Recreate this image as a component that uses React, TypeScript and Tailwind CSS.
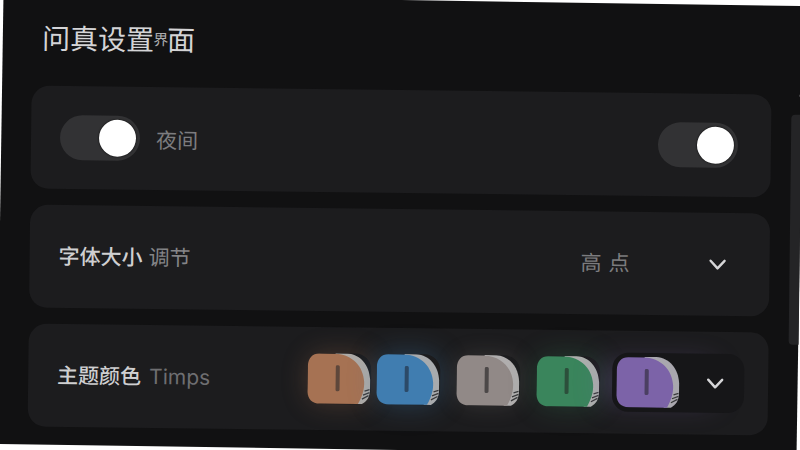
import { useState } from 'react'

interface SwitchProps {
  label: string
  id: string
}

const THEMES = [
  { key: 'orange', face: '#a67253', rim: '#aeaaa6', bar: '#5e473b', glow: 'shadow-[0_0_26px_#a66f4e4d]' },
  { key: 'blue', face: '#407db0', rim: '#a8abae', bar: '#2c4a68', glow: 'shadow-[0_0_28px_#3f7db05c]' },
  { key: 'gray', face: '#918987', rim: '#b0aeae', bar: '#4c4848', glow: 'shadow-[0_0_22px_#91888638]' },
  { key: 'green', face: '#3a855c', rim: '#acafac', bar: '#2c4f3b', glow: 'shadow-[0_0_28px_#38835a52]' },
  { key: 'purple', face: '#7c63a8', rim: '#a9a7ae', bar: '#4b3f62', glow: 'shadow-none' },
]

type Theme = (typeof THEMES)[number]

function Switch({ label, id }: SwitchProps) {
  const [on, setOn] = useState(true)

  return (
    <input
      id={id}
      type="checkbox"
      role="switch"
      aria-label={label}
      checked={on}
      onChange={(e) => setOn(e.target.checked)}
      className="flex h-[45px] w-20 shrink-0 cursor-pointer appearance-none items-center rounded-full bg-[#323234] px-1
                 before:size-[37px] before:rounded-full before:bg-white before:shadow-[0_0_2px_#000]
                 checked:justify-end"
    />
  )
}

function Chevron() {
  return (
    <svg className="h-3 w-[18px]" viewBox="0 0 18 12" fill="none" stroke="#d6d6d8" aria-hidden="true">
      <path strokeLinecap="round" strokeLinejoin="round" strokeWidth={2.4} d="M2 2l7 7.6L16 2" />
    </svg>
  )
}

function Token({ face, rim, bar }: Theme) {
  return (
    <svg className="h-[51px] w-16" viewBox="0 0 64 51" aria-hidden="true">
      <path fill={rim} d="M28 0H40C53 1 62 11 63 26V36C63 43 60 48 55 50.500H48Z" />
      <path stroke="#3a3a3c" strokeWidth={1.3} d="M57.500 37.500l5-1.500M56 41.500l6.500-2.500M55 45.500l6.500-3.500" />
      <path
        fill={face}
        d="M12 .5H28C45 1 56 13 57 28C57.500 36 55 44 51 50.500H13C5 50.500 1 46 .5 39V13C1 5 5 .5 12 .5Z"
      />
      <rect x="28.500" y="12" width="4" height="26" rx="1.500" fill={bar} />
    </svg>
  )
}

const CARD = 'flex h-[103px] items-center rounded-[18px] bg-[#1c1c1e]'

export default function App() {
  const [theme, setTheme] = useState('purple')

  const renderOption = (item: Theme) => (
    <label key={item.key} className={`cursor-pointer rounded-2xl ${item.glow}`}>
      <input
        type="radio"
        name="theme"
        aria-label={item.key}
        checked={theme === item.key}
        onChange={() => setTheme(item.key)}
        className="sr-only"
      />
      <Token {...item} />
    </label>
  )

  return (
    <div className="min-h-screen overflow-hidden bg-white font-['Inter','Noto_Sans_CJK_SC',sans-serif]">
      <div className="min-h-screen rotate-[0.88deg] bg-[#111112]">
        <div className="flex min-h-screen -rotate-[0.2deg]">
          <main className="flex-1 pl-[30px] pb-4">
            <header className="flex h-[90px] items-center pl-[10px] pb-1">
              <h1 className="flex items-center text-[28px] text-[#d4d4d6]">
                问真设置<span className="-mx-px text-[15px] text-[#acacae]">界</span>面
              </h1>
            </header>

            <div className="flex flex-col gap-4">
              <section className={`${CARD} justify-between pl-[29px] pr-[33px]`}>
                <div className="flex items-center gap-4">
                  <Switch id="night" label="夜间" />
                  <label htmlFor="night" className="pt-1 text-[21px] text-[#7c7c7f]">夜间</label>
                </div>
                <Switch id="night-auto" label="夜间" />
              </section>

              <section className={`${CARD} justify-between pl-[29px] pr-[43px]`}>
                <label htmlFor="font-size" className="flex items-baseline gap-1.5 text-[21px] font-medium text-[#cfcfd1]">
                  字体大小 <span className="font-normal text-[#858588]">调节</span>
                </label>
                <div className="grid items-center">
                  <select
                    id="font-size"
                    className="col-start-1 row-start-1 w-[146px] cursor-pointer appearance-none bg-transparent text-[21px] text-[#7c7c7f]"
                  >
                    <option>{'高\u2004点'}</option>
                  </select>
                  <span className="pointer-events-none col-start-1 row-start-1 justify-self-end">
                    <Chevron />
                  </span>
                </div>
              </section>

              <section className={`${CARD} justify-between pl-[29px] pr-6`}>
                <h2 className="flex items-baseline gap-2 text-[21px] font-medium text-[#cfcfd1]">
                  主题颜色 <span className="font-normal text-[#6e6e71]">Timps</span>
                </h2>
                <div className="flex items-center gap-3">
                  <div className="flex items-center gap-4">
                    <div className="flex gap-[5px]">{THEMES.slice(0, 2).map(renderOption)}</div>
                    {THEMES.slice(2, 4).map(renderOption)}
                  </div>
                  <div className="flex h-[59px] w-[132px] items-center justify-between rounded-2xl bg-[#161618] pl-1 pr-5 shadow-[-20px_0_30px_-12px_#7d62ab66]">
                    {THEMES.slice(4).map(renderOption)}
                    <button type="button" aria-label="主题颜色" className="cursor-pointer">
                      <Chevron />
                    </button>
                  </div>
                </div>
              </section>
            </div>
          </main>

          <aside className="flex w-[30px] flex-col items-end gap-[18px] pt-[90px]">
            <div className="size-[2px] bg-[#77777a]" />
            <div className="h-[230px] w-[10px] rounded-l-sm bg-[#242426]" />
          </aside>
        </div>
      </div>
    </div>
  )
}
